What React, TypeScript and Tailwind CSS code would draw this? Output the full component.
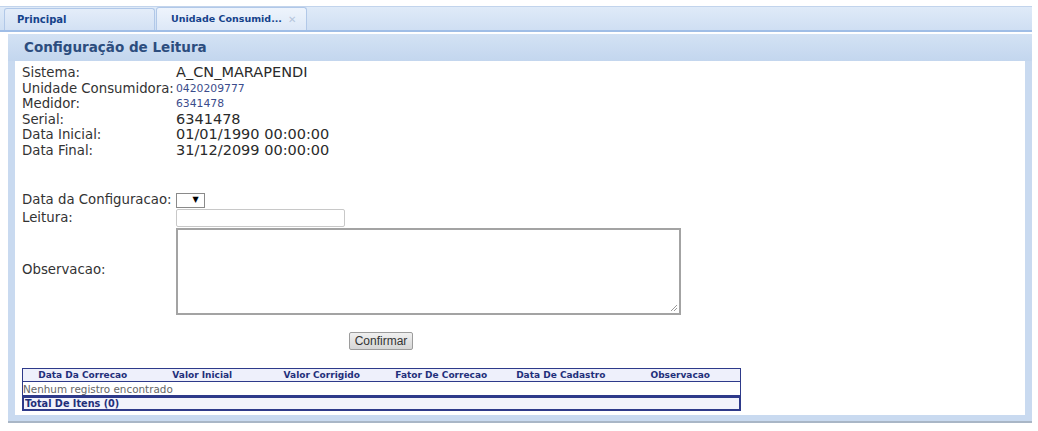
import React from 'react';

const info = [
  { label: 'Sistema:', value: 'A_CN_MARAPENDI', small: false },
  { label: 'Unidade Consumidora:', value: '0420209777', small: true },
  { label: 'Medidor:', value: '6341478', small: true },
  { label: 'Serial:', value: '6341478', small: false },
  { label: 'Data Inicial:', value: '01/01/1990 00:00:00', small: false },
  { label: 'Data Final:', value: '31/12/2099 00:00:00', small: false },
];

const columns = ['Data Da Correcao', 'Valor Inicial', 'Valor Corrigido', 'Fator De Correcao', 'Data De Cadastro', 'Observacao'];

export default function App() {
  return (
    <div className="w-[1038px] h-[431px] bg-white pt-[6px] font-['DejaVu_Sans',sans-serif] text-[#333]">
      {/* tab strip */}
      <div className="w-[1032px] h-[26px] bg-gradient-to-b from-[#dfeaf8] to-[#cfdff3] border-t border-[#c2d4ec] border-b-2 border-b-[#9fbde6] flex items-end pl-[4px] gap-[1px]">
        <div className="w-[151px] h-[22px] rounded-t-[3px] border border-b-0 border-[#b1c8e8] bg-gradient-to-b from-[#e4edf9] to-[#d3e1f4] flex items-center pl-[12px] text-[10px] font-bold text-[#15428b]">
          Principal
        </div>
        <div className="w-[151px] h-[23px] rounded-t-[3px] border border-b-0 border-[#b1c8e8] bg-gradient-to-b from-[#eef4fc] to-[#dde8f7] flex items-center pl-[14px] text-[9.5px] font-bold text-[#15428b]">
          <span>Unidade Consumid...</span>
          <span className="ml-[6px] text-[10px] font-normal text-[#b6c6dc]">✕</span>
        </div>
      </div>

      {/* panel */}
      <div className="w-[1024px] ml-[8px] mt-[2px] bg-[#c9daf0] border-b-2 border-[#a9b6c6] px-[7px] pb-[6px]">
        <div className="h-[27px] -mx-[7px] pl-[16px] flex items-center bg-gradient-to-b from-[#d3e2f4] to-[#c3d6ee] text-[13.5px] font-bold text-[#2c4d7e]">
          Configuração de Leitura
        </div>
        <div className="bg-white h-[354px] pl-[7px] pt-[4px]">
          <div className="text-[13.3px] leading-[15.5px]">
            {info.map((row) => (
              <div key={row.label} className="flex items-center h-[15.5px]">
                <div className="w-[154px] whitespace-nowrap">{row.label}</div>
                <div className={row.small ? 'text-[10.8px] text-[#3b4c8c]' : 'text-[14.5px] text-[#2a2a2a]'}>{row.value}</div>
              </div>
            ))}
          </div>

          <div className="mt-[34px] text-[13.3px]">
            <div className="flex items-center h-[16px]">
              <div className="w-[154px] whitespace-nowrap">Data da Configuracao:</div>
              <div className="w-[29px] h-[15px] border border-[#8a8a8a] bg-white flex items-center justify-center text-[8px] text-black pl-[10px]">▼</div>
            </div>
            <div className="flex items-center h-[19px]">
              <div className="w-[154px]">Leitura:</div>
              <div className="w-[169px] h-[18px] border border-[#c8c8c8] rounded-[2px] bg-white" />
            </div>
            <div className="flex items-center mt-[1px]">
              <div className="w-[154px] -mt-[3px]">Observacao:</div>
              <div className="relative w-[505px] h-[87px] border-2 border-[#a3a3a3] bg-white">
                <svg className="absolute right-[1px] bottom-[1px]" width="8" height="8" viewBox="0 0 8 8">
                  <path d="M7 1 L1 7 M7 4 L4 7" stroke="#9a9a9a" strokeWidth="1" />
                </svg>
              </div>
            </div>
          </div>

          <div className="mt-[17px] ml-[327px]">
            <div className="w-[64px] h-[18px] border border-[#9c9c9c] rounded-[2px] bg-gradient-to-b from-[#f0f0f0] to-[#d6d6d6] flex items-center justify-center font-['Liberation_Sans',sans-serif] text-[12px] text-[#333]">
              Confirmar
            </div>
          </div>

          <div className="mt-[18px] w-[719px]">
            <div className="border border-[#2e3a8a]">
              <div className="grid grid-cols-6 h-[13px] bg-[#eef0fb] border-b border-[#2e3a8a] items-center text-[9px] font-bold text-[#1f2f7a]">
                {columns.map((c) => (
                  <div key={c} className="text-center leading-[12px] whitespace-nowrap">{c}</div>
                ))}
              </div>
              <div className="h-[13px] flex items-center text-[10.4px] leading-[12px] text-[#666] bg-white whitespace-nowrap">
                Nenhum registro encontrado
              </div>
            </div>
            <div className="h-[15px] border-2 border-t-2 border-[#2e3a8a] bg-[#f2f3fb] flex items-center pl-[1px] text-[9.7px] font-bold text-[#1f2f7a] leading-[11px]">
              Total De Itens (0)
            </div>
          </div>
        </div>
      </div>
    </div>
  );
}
